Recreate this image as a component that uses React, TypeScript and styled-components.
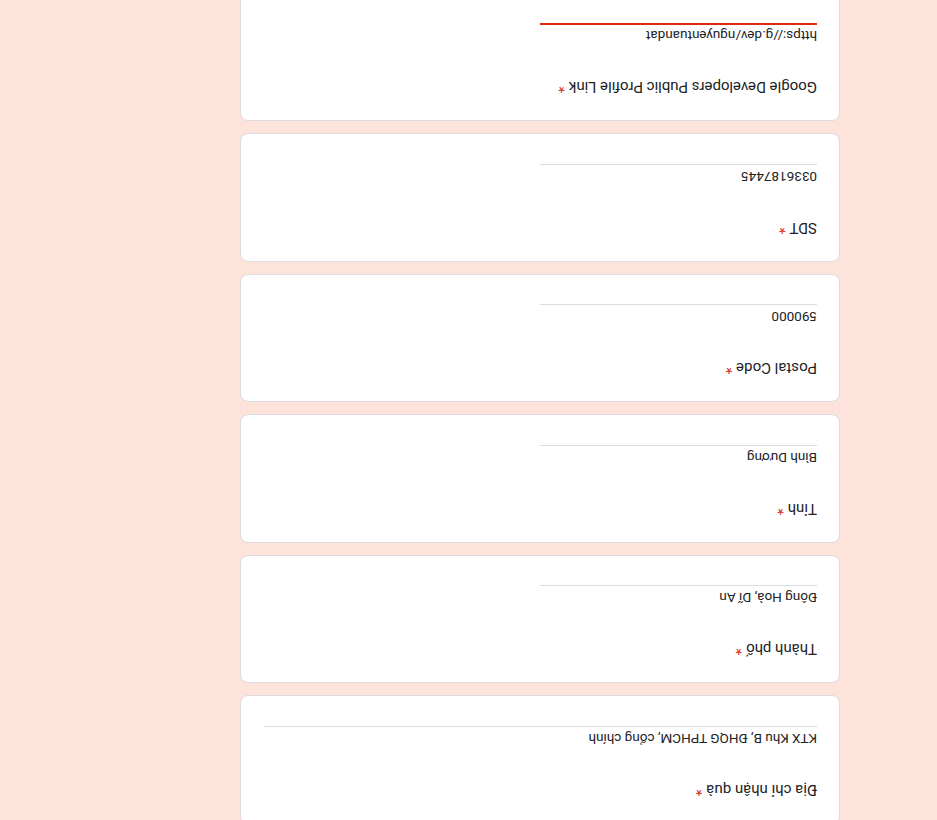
import React from "react";
import styled, { createGlobalStyle } from "styled-components";

const GlobalStyle = createGlobalStyle`
  html, body {
    margin: 0;
    padding: 0;
    background: #fde3da;
  }
  * { box-sizing: border-box; }
`;

const Page = styled.div`
  width: 937px;
  height: 820px;
  overflow: hidden;
  background: #fde3da;
  transform: rotate(180deg);
  font-family: Roboto, "Liberation Sans", Arial, sans-serif;
`;

const Column = styled.div`
  display: flex;
  flex-direction: column;
  gap: 12px;
  width: 600px;
  margin-left: 97px;
  margin-top: -4px;
`;

const Card = styled.div`
  height: 128.6px;
  flex-shrink: 0;
  background: #ffffff;
  border: 1px solid #dadce0;
  border-radius: 8px;
  padding: 23px 23px 0 22px;
  display: flex;
  flex-direction: column;
`;

const Label = styled.div`
  font-size: 15px;
  line-height: 20px;
  color: #202124;
  letter-spacing: 0;
`;

const Required = styled.span`
  color: #d93025;
  margin-left: 4px;
`;

const Field = styled.div<{ $full?: boolean; $focused?: boolean }>`
  margin-top: 31px;
  width: ${(p) => (p.$full ? "100%" : "50%")};
  font-size: 13.5px;
  line-height: 20px;
  color: #202124;
  padding-bottom: ${(p) => (p.$focused ? "1px" : "2px")};
  border-bottom: ${(p) => (p.$focused ? "2px solid #dd2c10" : "1px solid #dadce0")};
  white-space: nowrap;
  overflow: hidden;
`;

type Q = { label: string; value: string; full?: boolean; focused?: boolean };

const questions: Q[] = [
  { label: "Địa chỉ nhận quà", value: "KTX Khu B, ĐHQG TPHCM, cổng chính", full: true },
  { label: "Thành phố", value: "Đông Hoà, Dĩ An" },
  { label: "Tỉnh", value: "Bình Dương" },
  { label: "Postal Code", value: "590000" },
  { label: "SDT", value: "0336187445" },
  { label: "Google Developers Public Profile Link", value: "https://g.dev/nguyentuandat", focused: true },
];

export default function App() {
  return (
    <>
      <GlobalStyle />
      <Page>
        <Column>
          {questions.map((q) => (
            <Card key={q.label}>
              <Label>
                {q.label}
                <Required>*</Required>
              </Label>
              <Field $full={q.full} $focused={q.focused}>
                {q.value}
              </Field>
            </Card>
          ))}
        </Column>
      </Page>
    </>
  );
}
